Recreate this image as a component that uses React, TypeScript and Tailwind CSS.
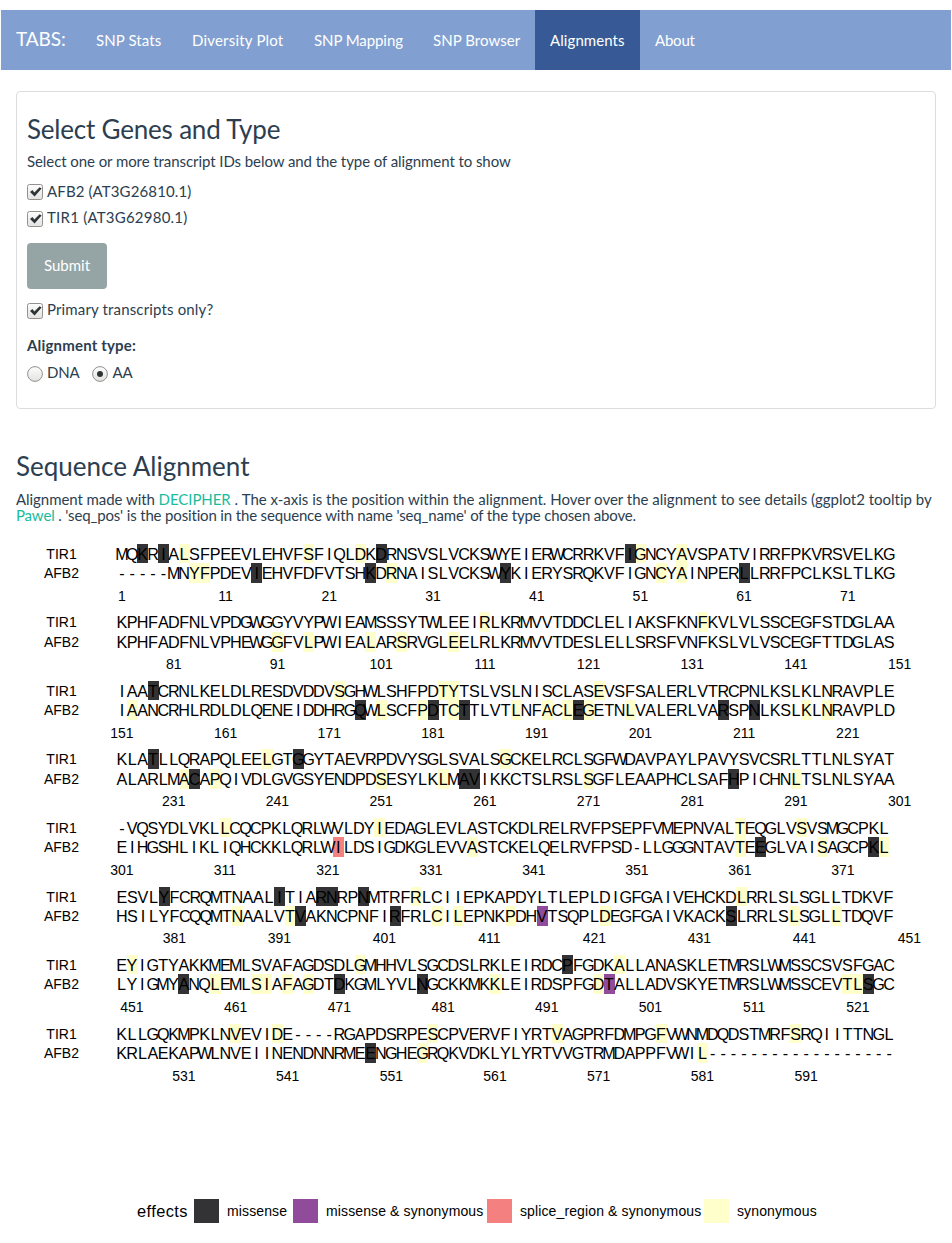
import React from "react";

type Effect = "missense" | "both" | "splice" | "synonymous";

const FILL: Record<Effect, string> = {
  missense: "#333335",
  both: "#904c9a",
  splice: "#f58080",
  synonymous: "#ffffcc",
};

type Row = { seq: string; marks: Partial<Record<Effect, number[]>> };
type Block = {
  x0: number;
  pitch: number;
  y: [number, number, number];
  start: number;
  ticks: number[];
  rows: [Row, Row];
};

const BLOCKS: Block[] = [
  {
    x0: 121.9, pitch: 10.37, y: [560, 579, 601], start: 1, ticks: [1, 11, 21, 31, 41, 51, 61, 71],
    rows: [
      { seq: "MQKRIALSFPEEVLEHVFSFIQLDKDRNSVSLVCKSWYEIERWCRRKVFIGNCYAVSPATVIRRFPKVRSVELKG", marks: { missense: [2, 4, 25, 49], synonymous: [6, 18, 23, 50, 54] } },
      { seq: "-----MNYFPDEVIEHVFDFVTSHKDRNAISLVCKSWYKIERYSRQKVFIGNCYAINPERLLRRFPCLKSLTLKG", marks: { missense: [13, 24, 37, 60], synonymous: [7, 8, 26, 52, 54] } },
    ],
  },
  {
    x0: 121.9, pitch: 10.37, y: [628, 648, 669], start: 76, ticks: [81, 91, 101, 111, 121, 131, 141, 151],
    rows: [
      { seq: "KPHFADFNLVPDGWGGYVYPWIEAMSSSYTWLEEIRLKRMVVTDDCLELIAKSFKNFKVLVLSSCEGFSTDGLAA", marks: { synonymous: [35, 56] } },
      { seq: "KPHFADFNLVPHEWGGFVLPWIEALARSRVGLEELRLKRMVVTDESLELLSRSFVNFKSLVLVSCEGFTTDGLAS", marks: { synonymous: [15, 18, 24, 27, 32] } },
    ],
  },
  {
    x0: 121.9, pitch: 10.37, y: [697, 716, 738], start: 151, ticks: [151, 161, 171, 181, 191, 201, 211, 221],
    rows: [
      { seq: "IAATCRNLKELDLRESDVDDVSGHWLSHFPDTYTSLVSLNISCLASEVSFSALERLVTRCPNLKSLKLNRAVPLE", marks: { missense: [3], synonymous: [21, 31, 32, 46] } },
      { seq: "IAANCRHLRDLDLQENEIDDHRGQWLSCFPDTCTTLVTLNFACLEGETNLVALERLVARSPNLKSLKLNRAVPLD", marks: { missense: [23, 30, 33, 44, 58, 61], synonymous: [1, 25, 29, 32, 38, 41, 43, 45, 49, 66, 68] } },
    ],
  },
  {
    x0: 121.9, pitch: 10.37, y: [765, 785, 806], start: 226, ticks: [231, 241, 251, 261, 271, 281, 291, 301],
    rows: [
      { seq: "KLATLLQRAPQLEELGTGGYTAEVRPDVYSGLSVALSGCKELRCLSGFWDAVPAYLPAVYSVCSRLTTLNLSYAT", marks: { missense: [3, 17], synonymous: [14, 37] } },
      { seq: "ALARLMACAPQIVDLGVGSYENDPDSESYLKLMAVIKKCTSLRSLSGFLEAAPHCLSAFHPICHNLTSLNLSYAA", marks: { missense: [7, 33, 34, 59], synonymous: [6, 9, 25, 31, 45, 65] } },
    ],
  },
  {
    x0: 121.9, pitch: 10.3, y: [834, 853, 875], start: 301, ticks: [301, 311, 321, 331, 341, 351, 361, 371],
    rows: [
      { seq: "-VQSYDLVKLLCQCPKLQRLWVLDYIEDAGLEVLASTCKDLRELRVFPSEPFVMEPNVALTEQGLVSVSMGCPKL", marks: { synonymous: [10, 25, 60, 66] } },
      { seq: "EIHGSHLIKLIQHCKKLQRLWILDSIGDKGLEVVASTCKELQELRVFPSD-LLGGGNTAVTEEGLVAISAGCPKL", marks: { missense: [62, 73], splice: [21], synonymous: [34, 60, 68, 74] } },
    ],
  },
  {
    x0: 121.9, pitch: 10.5, y: [903, 922, 943], start: 376, ticks: [381, 391, 401, 411, 421, 431, 441, 451],
    rows: [
      { seq: "ESVLYFCRQMTNAALITIARNRPNMTRFRLCIIEPKAPDYLTLEPLDIGFGAIVEHCKDLRRLSLSGLLTDKVF", marks: { missense: [4, 15, 19, 20, 23], synonymous: [28, 59] } },
      { seq: "HSILYFCQQMTNAALVTVAKNCPNFIRFRLCILEPNKPDHVTSQPLDEGFGAIVKACKSLRRLSLSGLLTDQVF", marks: { missense: [17, 26, 58], both: [40], synonymous: [11, 16, 30, 32, 37, 46, 64, 68] } },
    ],
  },
  {
    x0: 121.6, pitch: 10.37, y: [971, 990, 1012], start: 450, ticks: [451, 461, 471, 481, 491, 501, 511, 521],
    rows: [
      { seq: "EYIGTYAKKMEMLSVAFAGDSDLGMHHVLSGCDSLRKLEIRDCPFGDKALLANASKLETMRSLWMSSCSVSFGAC", marks: { missense: [43], synonymous: [1, 23, 48] } },
      { seq: "LYIGMYANQLEMLSIAFAGDTDKGMLYVLNGCKKMKKLEIRDSPFGDTALLADVSKYETMRSLWMSSCEVTLSGC", marks: { missense: [6, 21, 29, 72], both: [47], synonymous: [9, 13, 14, 16, 18, 36, 46, 70, 71] } },
    ],
  },
  {
    x0: 121.7, pitch: 10.37, y: [1040, 1059, 1081], start: 525, ticks: [531, 541, 551, 561, 571, 581, 591],
    rows: [
      { seq: "KLLGQKMPKLNVEVIDE----RGAPDSRPESCPVERVFIYRTVAGPRFDMPGFVWNMDQDSTMRFSRQIITTNGL", marks: { synonymous: [11, 15, 30, 42, 52, 65] } },
      { seq: "KRLAEKAPWLNVEIINENDNNRMEENGHEGRQKVDKLYLYRTVVGTRMDAPPFVWIL------------------", marks: { missense: [24], synonymous: [29, 56] } },
    ],
  },
];

const NAMES = ["TIR1", "AFB2"];
const ORDER: Effect[] = ["synonymous", "missense", "both", "splice"];

function AlignmentRow({ block, index }: { block: Block; index: number }) {
  const row = block.rows[index];
  const y = block.y[index];
  const xs = Array.from(row.seq, (_, i) => (block.x0 + i * block.pitch).toFixed(2));
  return (
    <g>
      {ORDER.map((effect) =>
        (row.marks[effect] ?? []).map((i) => (
          <rect
            key={effect + i}
            x={Math.round(block.x0 + i * block.pitch - 5.4)}
            y={y - 16}
            width={11}
            height={index === 0 ? block.y[1] - block.y[0] : 20}
            fill={FILL[effect]}
          />
        ))
      )}
      <text x={61.5} y={y - 1} fontSize={14} textAnchor="middle">{NAMES[index]}</text>
      <g fontSize={16.2} textAnchor="middle">
        {Array.from(row.seq, (c, i) => (
          <text key={i} x={xs[i]} y={y}>{c}</text>
        ))}
      </g>
    </g>
  );
}

function AlignmentPlot() {
  return (
    <svg width="952" height="560" viewBox="0 535 952 560" className="block font-['Liberation_Sans',sans-serif]" fill="#000">
      {BLOCKS.map((block) => (
        <g key={block.start}>
          <AlignmentRow block={block} index={0} />
          <AlignmentRow block={block} index={1} />
          <g fontSize={14} textAnchor="middle">
            {block.ticks.map((t) => (
              <text key={t} x={block.x0 + (t - block.start) * block.pitch} y={block.y[2]}>{t}</text>
            ))}
          </g>
        </g>
      ))}
    </svg>
  );
}

function Check({ label, spacing, low }: { label: string; spacing: string; low?: boolean }) {
  return (
    <label className="flex h-5 items-center">
      <svg width="16" height="16" viewBox="0 0 16 16" className={low ? "mr-1 mt-1" : "mr-1 mt-0.5"}>
        <defs>
          <linearGradient id="face" x1="0" y1="0" x2="0" y2="1">
            <stop offset="0" stopColor="#fdfdfd" />
            <stop offset="1" stopColor="#e2e2e1" />
          </linearGradient>
        </defs>
        <rect x=".5" y=".5" width="15" height="15" rx="2" fill="url(#face)" stroke="#92918e" />
        <path d="M3 8 5.4 6 7.4 8.6 12.6 3.2 14.6 4.6 7.6 12.6Z" fill="#2e3436" />
      </svg>
      <span className={spacing}>{label}</span>
    </label>
  );
}

function Radio({ label, checked }: { label: string; checked?: boolean }) {
  return (
    <label className="flex h-5 items-center">
      <svg width="16" height="16" viewBox="0 0 16 16" className="mr-1 mt-1">
        <circle cx="8" cy="8" r="7.4" fill="url(#face)" stroke="#92918e" />
        {checked && <circle cx="8" cy="8" r="3" fill="#2e3436" />}
      </svg>
      <span className="tracking-[-0.2px]">{label}</span>
    </label>
  );
}

const TABS = [
  { label: "SNP Stats", style: "w-[96px] tracking-[0.1px]" },
  { label: "Diversity Plot", style: "w-[122px] tracking-[0.2px]" },
  { label: "SNP Mapping", style: "w-[119px] tracking-[-0.08px]" },
  { label: "SNP Browser", style: "w-[117px] tracking-[0.04px]" },
  { label: "Alignments", style: "w-[105px] bg-[#375a96] tracking-[0.08px]" },
  { label: "About", style: "w-[71px] tracking-[-0.2px]" },
];

const LEGEND = [
  { label: "missense", swatch: "bg-[#333335]", box: "w-[99px]" },
  { label: "missense & synonymous", swatch: "bg-[#904c9a]", box: "w-[194px]" },
  { label: "splice_region & synonymous", swatch: "bg-[#f58080]", box: "w-[217px]" },
  { label: "synonymous", swatch: "bg-[#ffffcc]", box: "w-[130px]" },
];

export default function App() {
  return (
    <div className="h-[1243px] w-[952px] overflow-hidden bg-white pt-[10px] font-['Lato',sans-serif] text-[15px] leading-5 text-[#2c3e50] [font-variant-ligatures:none]">
      <nav className="mx-px flex h-[60px] bg-[#819fd1] text-white">
        <span className="w-20 pl-[15px] pt-[19px] text-[19px] tracking-[-0.1px]">TABS:</span>
        {TABS.map((tab) => (
          <a key={tab.label} className={`whitespace-nowrap pl-[15px] pt-5 ${tab.style}`}>
            {tab.label}
          </a>
        ))}
      </nav>

      <section className="ml-4 mt-[21px] h-[318px] w-[920px] rounded border border-[#dddddd] px-[10px] pt-[22px]">
        <h3 className="text-[26px] leading-[30px] tracking-[-0.2px]">Select Genes and Type</h3>
        <p className="mt-[7px] tracking-[-0.075px]">Select one or more transcript IDs below and the type of alignment to show</p>
        <div className="mt-[10px] flex flex-col gap-[6px]">
          <Check label="AFB2 (AT3G26810.1)" spacing="tracking-[0.12px]" />
          <Check label="TIR1 (AT3G62980.1)" spacing="tracking-[0.23px]" low />
        </div>
        <button className="mt-4 block h-[46px] w-20 rounded bg-[#95a5a6] pb-0.5 text-white">Submit</button>
        <div className="mt-[10px]">
          <Check label="Primary transcripts only?" spacing="tracking-[0.15px]" low />
        </div>
        <p className="mt-4 font-bold tracking-[0.18px]">Alignment type:</p>
        <div className="mt-[7px] flex gap-[13px]">
          <Radio label="DNA" />
          <Radio label="AA" checked />
        </div>
      </section>

      <section className="ml-4 mt-[42px] h-[84px] w-[930px]">
        <h3 className="text-[26px] leading-[30px]">Sequence Alignment</h3>
        <p className="mt-[10px] whitespace-nowrap leading-4">
          <span className="tracking-[-0.06px]">
            Alignment made with <a className="text-[#18bc9c]">DECIPHER</a> .{" "}
          </span>
          <span className="tracking-[-0.008px]">
            The x-axis is the position within the alignment. Hover over the alignment to see details (ggplot2 tooltip by
          </span>
          <br />
          <span className="tracking-[-0.155px]">
            <a className="text-[#18bc9c]">Pawel</a> . 'seq_pos' is the position in the sequence with name 'seq_name' of the type chosen above.
          </span>
        </p>
      </section>

      <AlignmentPlot />

      <div className="mt-[104px] flex h-6 items-center font-['Liberation_Sans',sans-serif] text-[14px] tracking-[0.12px] text-black">
        <span className="w-[194px] pl-[137px] text-[16.4px] tracking-[0.4px]">effects</span>
        {LEGEND.map((item) => (
          <div key={item.label} className={`flex items-center whitespace-nowrap ${item.box}`}>
            <span className={`mr-2 h-6 w-[25px] shrink-0 ${item.swatch}`} />
            <span>{item.label}</span>
          </div>
        ))}
      </div>
    </div>
  );
}
